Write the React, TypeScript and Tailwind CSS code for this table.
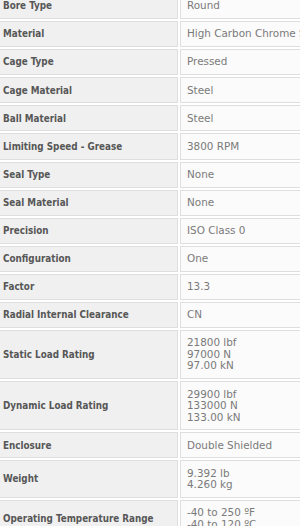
import React from "react";

type Spec = { label: string; lines: string[] };

const specs: Spec[] = [
  { label: "Bore Type", lines: ["Round"] },
  { label: "Material", lines: ["High Carbon Chrome Steel"] },
  { label: "Cage Type", lines: ["Pressed"] },
  { label: "Cage Material", lines: ["Steel"] },
  { label: "Ball Material", lines: ["Steel"] },
  { label: "Limiting Speed - Grease", lines: ["3800 RPM"] },
  { label: "Seal Type", lines: ["None"] },
  { label: "Seal Material", lines: ["None"] },
  { label: "Precision", lines: ["ISO Class 0"] },
  { label: "Configuration", lines: ["One"] },
  { label: "Factor", lines: ["13.3"] },
  { label: "Radial Internal Clearance", lines: ["CN"] },
  { label: "Static Load Rating", lines: ["21800 lbf", "97000 N", "97.00 kN"] },
  { label: "Dynamic Load Rating", lines: ["29900 lbf", "133000 N", "133.00 kN"] },
  { label: "Enclosure", lines: ["Double Shielded"] },
  { label: "Weight", lines: ["9.392 lb", "4.260 kg"] },
  { label: "Operating Temperature Range", lines: ["-40 to 250 ºF", "-40 to 120 ºC"] },
];

export default function App() {
  return (
    <div
      className="w-[300px] h-[526px] overflow-hidden bg-white"
      style={{ fontFamily: '"DejaVu Sans", Verdana, sans-serif' }}
    >
      <table className="-mt-[9px] -ml-[5px] border-separate border-spacing-[2px] leading-[11.5px]">
        <tbody>
          {specs.map((s) => (
            <tr key={s.label}>
              <td
                className="w-[181px] min-w-[181px] max-w-[181px] whitespace-nowrap border border-[#dedede] bg-[#f0f0f0] px-[5px] py-[6.3px] align-middle text-[9.8px] font-bold text-[#575757]"
                style={{ fontFamily: '"DejaVu Sans Condensed", "DejaVu Sans", sans-serif' }}
              >
                {s.label}
              </td>
              <td className="w-[220px] min-w-[220px] whitespace-nowrap border border-[#dedede] bg-[#fbfbfb] px-[6px] py-[6.3px] align-middle text-[10.4px] text-[#7a7a7a]">
                {s.lines.map((l) => (
                  <div key={l}>{l}</div>
                ))}
              </td>
            </tr>
          ))}
        </tbody>
      </table>
    </div>
  );
}
